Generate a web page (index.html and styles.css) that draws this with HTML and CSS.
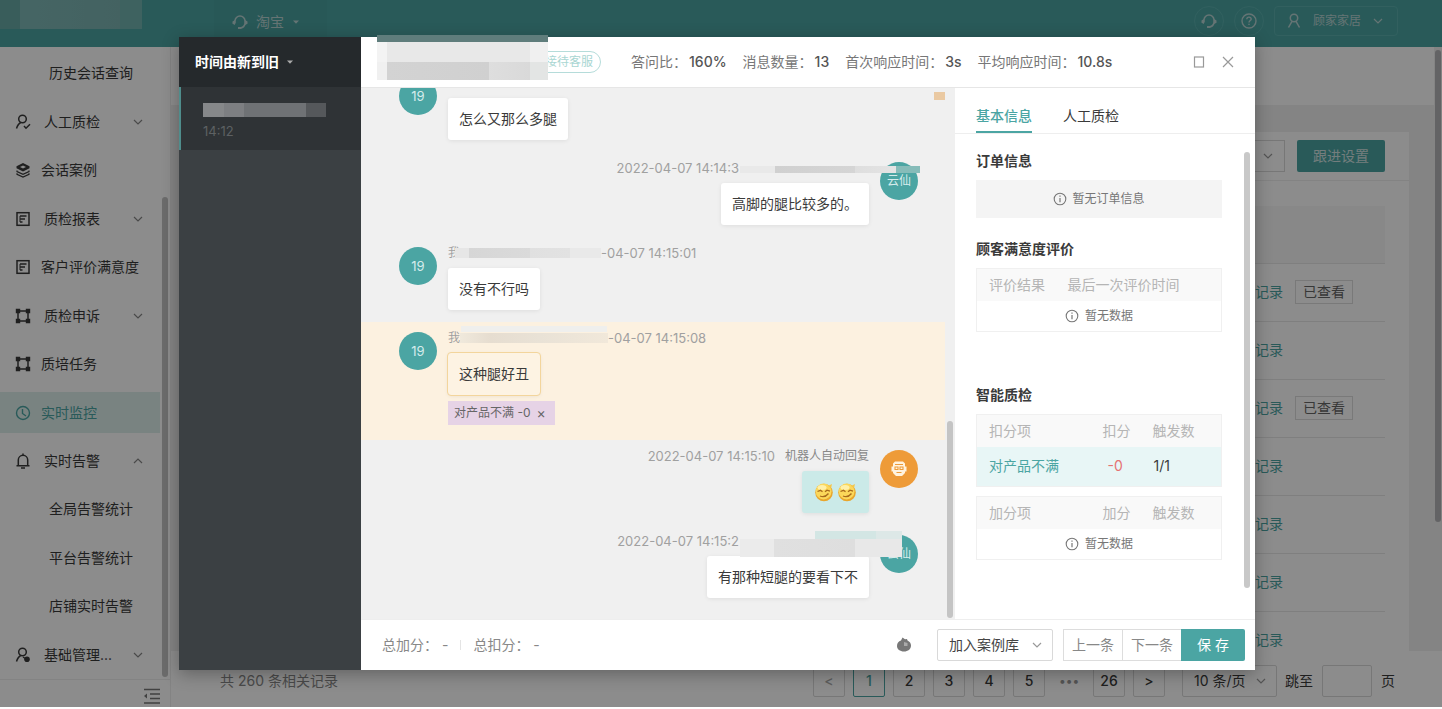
FILE: index.html
```html
<!DOCTYPE html>
<html lang="zh-CN">
<head>
<meta charset="utf-8">
<title>实时监控</title>
<link rel="stylesheet" href="styles.css">
</head>
<body>
<svg class="defs" aria-hidden="true">
  <symbol id="down" viewBox="0 0 12 12"><path d="M2 4l4 4 4-4" fill="none" stroke="currentColor" stroke-width="1.2"/></symbol>
  <symbol id="caret" viewBox="0 0 8 8"><path d="M1 2.500h6L4 5.800z" fill="currentColor"/></symbol>
  <symbol id="headset" viewBox="0 0 16 16"><path d="M3 9.500V7a5 5 0 0 1 10 0v2.500c-.5 2.500-2 4-4 4.300" fill="none" stroke="currentColor" stroke-width="1.500"/><path d="M.5 7.500L3 6v5L.5 9.800zM15.500 7.500L13 6v5l2.500-1.200zM6 13h3.500v2H6z" fill="currentColor"/></symbol>
  <symbol id="person" viewBox="0 0 16 16"><g fill="none" stroke="currentColor" stroke-width="1.5"><circle cx="8" cy="5" r="3.700"/><path d="M6 8.300L2.500 14.500M10 8.300l3.500 6.200"/></g></symbol>
  <symbol id="user-check" viewBox="0 0 16 16"><g fill="none" stroke="currentColor" stroke-width="1.500"><circle cx="7.500" cy="5" r="3.800"/><path d="M5.800 8.500C3.500 9.500 2.500 11.500 1.500 14.500M9 12l2 2.200 4-4"/></g></symbol>
  <symbol id="user-cog" viewBox="0 0 16 16"><g fill="none" stroke="currentColor" stroke-width="1.500"><circle cx="7.500" cy="5" r="3.800"/><path d="M5.800 8.500C3.500 9.500 2.500 11.500 1.500 14.500"/></g><circle cx="12" cy="12.200" r="2.800" fill="currentColor"/><path d="M8 10l3 2" stroke="currentColor" stroke-width="1.400"/></symbol>
  <symbol id="layers" viewBox="0 0 16 16"><path d="M8 1l6.500 3.200v2L8 9.500 1.500 6.200v-2z" fill="currentColor"/><path d="M5 5l3 1.500L11 5 8 3.600z" fill="#fff"/><path d="M2 8.500v1L8 12.400l6-2.900v-1M2 11.300v1L8 15l6-2.700v-1" fill="none" stroke="currentColor" stroke-width="1.200"/></symbol>
  <symbol id="report" viewBox="0 0 16 16"><g fill="none" stroke="currentColor" stroke-width="1.500"><rect x="2" y="1.700" width="12" height="12.600"/><path d="M5 5h6.500M5 8h5M5 11h2.500"/></g><path d="M5 5v6" stroke="currentColor"/></symbol>
  <symbol id="frame" viewBox="0 0 16 16"><rect x="3" y="3" width="10" height="10" fill="none" stroke="currentColor" stroke-width="1.500"/><path d="M.8.800h4.400v4.400H.8zM10.800.800h4.400v4.400h-4.400zM.8 10.800h4.400v4.400H.8zM10.800 10.800h4.400v4.400h-4.400z" fill="currentColor"/></symbol>
  <symbol id="clock" viewBox="0 0 16 16"><g fill="none" stroke="currentColor" stroke-width="1.400"><circle cx="8" cy="8" r="6.500"/><path d="M7.500 4v4.500l3.500 2.500"/></g></symbol>
  <symbol id="bell" viewBox="0 0 16 16"><g fill="none" stroke="currentColor" stroke-width="1.500"><path d="M1.500 12.700h13M3.300 12.500V7a4.700 4.700 0 0 1 9.400 0v5.500M6 15h4M8 .5v2"/></g></symbol>
  <symbol id="info" viewBox="0 0 14 14"><circle cx="7" cy="7" r="5.800" fill="none" stroke="currentColor" stroke-width="1.100"/><path d="M7 6v4.200M7 3.600v1.200" stroke="currentColor" stroke-width="1.200"/></symbol>
  <symbol id="face" viewBox="0 0 20 20"><circle cx="10" cy="10.500" r="8.800" fill="#e9a62c"/><circle cx="9.600" cy="9.500" r="7.900" fill="#fbd75a"/><ellipse cx="8" cy="5.500" rx="4.500" ry="2.500" fill="#fff0a8"/><path d="M3.500 9.500l3-1.200 2 1.500M11 9.800l2-1.600 3 1M6 14c3 1.300 6 .6 8.500-2.500" fill="none" stroke="#a86a1c" stroke-width="1.300"/><path d="M14 4l4-2-1 4z" fill="#f6c64a"/></symbol>
</svg>

<div class="app">
  <header class="topbar">
    <div class="brand"></div>
    <button class="platform" type="button"><svg class="i16"><use href="#headset"/></svg>淘宝<svg class="i8"><use href="#caret"/></svg></button>
    <div class="topbar-tools">
      <button class="round" type="button" aria-label="客服"><svg class="i16"><use href="#headset"/></svg></button>
      <button class="round" type="button" aria-label="帮助"><svg class="i16" viewBox="0 0 16 16"><g fill="none" stroke="currentColor" stroke-width="1.400"><circle cx="8" cy="8" r="7"/><path d="M5.800 6.200c.2-3 4.600-2.600 4.400 0C10 7.600 8 7.600 8 9.500M8 10.700v1.400"/></g></svg></button>
      <button class="account" type="button"><svg class="i16"><use href="#person"/></svg>顾家家居<svg class="i12"><use href="#down"/></svg></button>
    </div>
  </header>

  <div class="body">
    <aside class="sidebar">
      <nav class="menu">
        <a class="sub" href="#">历史会话查询</a>
        <a class="parent" href="#"><svg class="i16"><use href="#user-check"/></svg>人工质检<svg class="i12 arrow"><use href="#down"/></svg></a>
        <a href="#"><svg class="i16"><use href="#layers"/></svg>会话案例</a>
        <a class="parent" href="#"><svg class="i16"><use href="#report"/></svg>质检报表<svg class="i12 arrow"><use href="#down"/></svg></a>
        <a href="#"><svg class="i16"><use href="#report"/></svg>客户评价满意度</a>
        <a class="parent" href="#"><svg class="i16"><use href="#frame"/></svg>质检申诉<svg class="i12 arrow"><use href="#down"/></svg></a>
        <a href="#"><svg class="i16"><use href="#frame"/></svg>质培任务</a>
        <a class="active" href="#"><svg class="i16"><use href="#clock"/></svg>实时监控</a>
        <a class="parent" href="#"><svg class="i16"><use href="#bell"/></svg>实时告警<svg class="i12 arrow up"><use href="#down"/></svg></a>
        <a class="sub" href="#">全局告警统计</a>
        <a class="sub" href="#">平台告警统计</a>
        <a class="sub" href="#">店铺实时告警</a>
        <a class="parent" href="#"><svg class="i16"><use href="#user-cog"/></svg>基础管理...<svg class="i12 arrow"><use href="#down"/></svg></a>
      </nav>
      <div class="side-thumb"></div>
      <button class="collapse" type="button" aria-label="收起菜单"><svg viewBox="0 0 18 16" width="18" height="16"><path d="M1 1.500h16M7 6h10M7 10.500h10M1 15h16" stroke="currentColor" stroke-width="1.300"/><path d="M4 5.500v5L1 8z" fill="currentColor"/></svg></button>
    </aside>

    <main class="main">
      <div class="strip"></div>
      <section class="card">
        <div class="card-tools">
          <span class="filter"><svg class="i12"><use href="#down"/></svg></span>
          <button class="primary" type="button">跟进设置</button>
        </div>
        <table class="records">
          <thead><tr><th></th><th></th></tr></thead>
          <tbody>
            <tr><td><a href="#">记录</a></td><td><span class="seen">已查看</span></td></tr>
            <tr><td><a href="#">记录</a></td><td></td></tr>
            <tr><td><a href="#">记录</a></td><td><span class="seen">已查看</span></td></tr>
            <tr><td><a href="#">记录</a></td><td></td></tr>
            <tr><td><a href="#">记录</a></td><td></td></tr>
            <tr><td><a href="#">记录</a></td><td></td></tr>
            <tr><td><a href="#">记录</a></td><td></td></tr>
          </tbody>
        </table>
      </section>
      <footer class="pager">
        <span class="total">共 260 条相关记录</span>
        <button type="button" class="muted">&lt;</button>
        <button type="button" class="current">1</button>
        <button type="button">2</button>
        <button type="button">3</button>
        <button type="button">4</button>
        <button type="button">5</button>
        <span class="dots">•••</span>
        <button type="button">26</button>
        <button type="button">&gt;</button>
        <span class="pick size"><select aria-label="每页条数"><option>10 条/页</option></select><svg class="i12"><use href="#down"/></svg></span>
        <label class="jump">跳至<input type="text">页</label>
      </footer>
      <div class="main-thumb"></div>
    </main>
  </div>

  <div class="mask">
    <div class="dialog" role="dialog" aria-label="会话详情">
      <aside class="sessions">
        <button class="sort" type="button">时间由新到旧<svg class="i8"><use href="#caret"/></svg></button>
        <div class="session">
          <div class="pix"><i class="p1"></i><i class="p2"></i><i class="p3"></i><i class="p3"></i><i class="p3"></i><i class="p4"></i></div>
          <time>14:12</time>
        </div>
      </aside>

      <div class="detail">
        <header class="detail-head">
          <div class="name-pix"></div>
          <span class="role">接待客服</span>
          <dl class="stats">
            <div><dt>答问比：</dt><dd>160%</dd></div>
            <div><dt>消息数量：</dt><dd>13</dd></div>
            <div><dt>首次响应时间：</dt><dd>3s</dd></div>
            <div><dt>平均响应时间：</dt><dd>10.8s</dd></div>
          </dl>
          <button class="win" type="button" aria-label="最大化"><svg class="i12" viewBox="0 0 12 12"><rect x="1.500" y="1" width="9" height="10" fill="none" stroke="currentColor" stroke-width="1.200"/></svg></button>
          <button class="win" type="button" aria-label="关闭"><svg class="i12" viewBox="0 0 12 12"><path d="M1 1l10 10M11 1L1 11" stroke="currentColor" stroke-width="1.200"/></svg></button>
        </header>

        <div class="content">
          <section class="chat">
            <div class="msg">
              <span class="avatar">19</span>
              <div class="col"><div class="meta"><i class="blur wide"></i></div><p class="bubble">怎么又那么多腿</p></div>
            </div>
            <div class="msg right">
              <span class="avatar">云仙</span>
              <div class="col"><div class="meta"><time>2022-04-07 14:14:3</time><i class="gap"></i></div><p class="bubble">高脚的腿比较多的。</p></div>
              <i class="cover thin"></i>
            </div>
            <div class="msg">
              <span class="avatar">19</span>
              <div class="col"><div class="meta">我<i class="blur"></i><time>-04-07 14:15:01</time></div><p class="bubble">没有不行吗</p></div>
            </div>
            <div class="msg hit">
              <span class="avatar">19</span>
              <div class="col"><div class="meta">我<i class="blur warm"></i><time>-04-07 14:15:08</time></div><p class="bubble">这种腿好丑</p><span class="label">对产品不满 -0<button type="button" aria-label="移除">×</button></span></div>
              <i class="cover pale"></i>
            </div>
            <div class="msg right">
              <span class="avatar bot"><svg viewBox="0 0 18 18" width="18" height="18"><path d="M3 3.500L5 1.500h8l2 2v3h1.500v5H15v1.500L12 16H6l-3-3v-1.500H1.500v-5H3z" fill="#fff3de"/><path d="M5 4.500h8M5 7v2.500h3V7zM10 7v2.500h3V7zM6.500 12.500h5" fill="none" stroke="#ee9b38" stroke-width="1.100"/></svg></span>
              <div class="col"><div class="meta"><time>2022-04-07 14:15:10</time><b>机器人自动回复</b></div><p class="bubble aqua"><svg class="i20"><use href="#face"/></svg><svg class="i20"><use href="#face"/></svg></p></div>
            </div>
            <div class="msg right">
              <span class="avatar">云仙</span>
              <div class="col"><div class="meta"><time>2022-04-07 14:15:2</time><i class="gap"></i></div><p class="bubble">有那种短腿的要看下不</p></div>
              <i class="cover thick"></i>
            </div>
            <i class="mark"></i>
            <div class="chat-thumb"></div>
          </section>

          <section class="info">
            <div class="tabs" role="tablist">
              <button role="tab" aria-selected="true" type="button">基本信息</button>
              <button role="tab" aria-selected="false" type="button">人工质检</button>
            </div>
            <div class="panel">
              <h3>订单信息</h3>
              <div class="none"><svg class="i14"><use href="#info"/></svg>暂无订单信息</div>
              <h3>顾客满意度评价</h3>
              <table class="grid rating">
                <thead><tr><th>评价结果</th><th>最后一次评价时间</th></tr></thead>
                <tbody><tr><td class="empty" colspan="2"><span><svg class="i14"><use href="#info"/></svg>暂无数据</span></td></tr></tbody>
              </table>
              <h3 class="far">智能质检</h3>
              <table class="grid score">
                <thead><tr><th>扣分项</th><th>扣分</th><th>触发数</th></tr></thead>
                <tbody><tr class="found"><td>对产品不满</td><td>-0</td><td>1/1</td></tr></tbody>
              </table>
              <table class="grid score">
                <thead><tr><th>加分项</th><th>加分</th><th>触发数</th></tr></thead>
                <tbody><tr><td class="empty" colspan="3"><span><svg class="i14"><use href="#info"/></svg>暂无数据</span></td></tr></tbody>
              </table>
            </div>
            <div class="info-thumb"></div>
          </section>
        </div>

        <footer class="detail-foot">
          <span>总加分： -</span><i class="bar"></i><span>总扣分： -</span>
          <svg class="i16 push" viewBox="0 0 16 16"><path d="M5 3.500L6.500.500l2.500 1.800 2-.300.500 1.500c2.200 1 3.500 2.700 3.500 5 0 3.700-3 6-7 6s-7-2.300-7-5.500C1 6.300 2.500 4.300 5 3.500z" fill="#777"/><path d="M8 5v4h3.500V6z" fill="#aaa"/></svg>
          <span class="pick library"><select aria-label="加入案例库"><option>加入案例库</option></select><svg class="i12"><use href="#down"/></svg></span>
          <div class="group"><button type="button">上一条</button><button type="button">下一条</button><button class="save" type="button">保 存</button></div>
        </footer>
      </div>
    </div>
  </div>
</div>
</body>
</html>
```

FILE: styles.css
```css
* { box-sizing: border-box; }
body {
  margin: 0;
  background: #fff;
  color: #3a3a3a;
  font: 14px/20px Inter, "Noto Sans CJK SC", sans-serif;
}
button, input, select {
  font: inherit;
  color: inherit;
  margin: 0;
  padding: 0;
  border: 0;
  background: none;
}
a { color: inherit; text-decoration: none; }
p, dl, dd, h3 { margin: 0; }
table { border-collapse: collapse; width: 100%; }
th { font-weight: 400; text-align: left; }
th, td { padding: 0; }
svg { display: block; flex: none; }
.defs { position: absolute; width: 0; height: 0; }
.i8 { width: 8px; height: 8px; }
.i12 { width: 12px; height: 12px; }
.i14 { width: 14px; height: 14px; }
.i16 { width: 16px; height: 16px; }
.i20 { width: 20px; height: 20px; }

.app {
  position: relative;
  display: flex;
  flex-direction: column;
  height: calc(100vh - 2px);
  overflow: hidden;
}

/* top bar */
.topbar {
  display: flex;
  align-items: flex-start;
  flex: none;
  height: 47px;
  padding-right: 44px;
  background: #4ba5a3;
  color: #b9d4d4;
}
.brand {
  width: 142px;
  height: 29px;
  background: linear-gradient(90deg, #68aaa7 20px, #7fb9b7 20px, #7cb3b1 120px, #72b3b0 120px);
}
.platform {
  display: flex;
  align-items: center;
  gap: 8px;
  height: 43px;
  margin-left: 72px;
  padding: 0 27px 0 18px;
  background: #49a19f;
}
.topbar-tools { display: flex; gap: 10px; margin-left: auto; padding-top: 6px; }
.round {
  display: grid;
  place-items: center;
  width: 30px;
  height: 30px;
  border: 1px solid #5bb0ae;
  border-radius: 50%;
}
.account {
  display: flex;
  align-items: center;
  gap: 11px;
  height: 30px;
  padding: 0 13px 0 11px;
  border: 1px solid #5bb0ae;
  border-radius: 4px;
  font-size: 12px;
}

/* side menu */
.body { display: flex; flex: 1; min-height: 0; }
.sidebar {
  position: relative;
  display: flex;
  flex-direction: column;
  width: 171px;
  border-right: 1px solid #eee;
  background: #fff;
}
.menu { display: flex; flex-direction: column; flex: 1; padding: 2px 10px 0 0; }
.menu a {
  display: flex;
  align-items: center;
  flex: 1;
  gap: 10px;
  padding-left: 15px;
  border: solid transparent;
  border-width: 4px 0;
}
.menu .parent { gap: 13px; }
.menu .sub { padding-left: 49px; }
.menu .active { color: #4ba5a3; background: #dcefec padding-box; }
.arrow { margin-left: auto; margin-right: 16px; color: #888; }
.up { transform: rotate(180deg); }
.collapse {
  display: flex;
  align-items: center;
  justify-content: flex-end;
  height: 28px;
  padding: 4px 9px 0 0;
  border-top: 1px solid #eee;
  color: #777;
}
.side-thumb {
  position: absolute;
  right: 2px;
  top: 150px;
  bottom: 30px;
  width: 6px;
  border-radius: 3px;
  background: #c4c4c4;
}

/* page behind the dialog */
.main {
  position: relative;
  display: flex;
  flex-direction: column;
  flex: 1;
  min-width: 0;
  background: #f0f0f0;
}
.strip { flex: none; height: 58px; margin-right: 8px; background: #fff; }
.card {
  flex: 1;
  min-height: 0;
  overflow: hidden;
  margin: 27px 33px 0 25px;
  background: #fff;
}
.card-tools {
  display: flex;
  justify-content: flex-end;
  gap: 12px;
  height: 49px;
  padding: 8px 24px;
  border-bottom: 1px solid #eee;
}
.filter {
  display: flex;
  align-items: center;
  justify-content: flex-end;
  width: 160px;
  height: 32px;
  padding-right: 10px;
  border: 1px solid #d9d9d9;
  color: #999;
}
.primary {
  height: 32px;
  padding: 0 16px;
  border-radius: 2px;
  background: #4ba5a3;
  color: #d3e4e4;
}
.records { width: calc(100% - 48px); margin: 25px 24px 0; }
.records th { height: 57px; background: #f7f7f7; }
.records td { height: 58px; border-top: 1px solid #e8e8e8; }
.records td:first-child { text-align: right; color: #4ba5a3; }
.records td:last-child { width: 102px; padding-left: 12px; }
.seen {
  display: inline-block;
  padding: 1px 7px;
  border: 1px solid #ddd;
  color: #666;
}
.pager {
  display: flex;
  align-items: center;
  flex: none;
  gap: 8px;
  height: 56px;
  padding: 4px 47px 0 49px;
  background: #fff;
}
.total { margin-right: auto; color: #888; }
.pager button {
  width: 32px;
  height: 32px;
  border: 1px solid #d9d9d9;
  border-radius: 2px;
  font-weight: 500;
}
.pager .muted { color: #aaa; }
.pager .current { border-color: #4ba5a3; color: #4ba5a3; }
.dots { width: 32px; text-align: center; color: #999; font-size: 12px; }
.pick {
  position: relative;
  display: flex;
  align-items: center;
  border: 1px solid #d9d9d9;
  border-radius: 2px;
}
.pick select {
  appearance: none;
  width: 100%;
  height: 30px;
  padding: 0 30px 0 11px;
}
.pick svg { position: absolute; right: 9px; color: #999; pointer-events: none; }
.size { width: 95px; margin-left: 9px; }
.size select { padding-right: 10px; }
.jump { display: flex; align-items: center; gap: 9px; }
.jump input { width: 50px; height: 32px; border: 1px solid #d9d9d9; border-radius: 2px; }
.main-thumb {
  position: absolute;
  right: 1px;
  top: 3px;
  height: 472px;
  width: 6px;
  border-radius: 3px;
  background: #b5b5b8;
}

/* dialog */
.mask {
  position: absolute;
  inset: 0;
  display: flex;
  padding: 37px 187px 37px 179px;
  background: rgba(0, 0, 0, .45);
}
.dialog {
  display: flex;
  flex: 1;
  min-width: 0;
  background: #fff;
  box-shadow: 0 4px 16px rgba(0, 0, 0, .3);
}
.sessions { width: 182px; background: #3b4043; color: #fff; }
.sort {
  display: flex;
  align-items: center;
  gap: 7px;
  width: 100%;
  height: 50px;
  padding-left: 16px;
  background: #25292c;
  font-weight: 700;
}
.sort svg { color: #aaa; }
.session {
  display: flex;
  flex-direction: column;
  gap: 5px;
  height: 63px;
  padding: 16px 0 0 22px;
  border-left: 2px solid #4f8d8c;
  background: #2f3336;
}
.session time { font-size: 13px; line-height: 18px; color: #5d6163; }
.pix { display: flex; width: 123px; height: 14px; }
.pix i { flex: 1; }
.p1 { background: #86888a; }
.p2 { background: #7d7f82; }
.p3 { background: #6f7275; }
.p4 { background: #55585b; }

.detail { display: flex; flex-direction: column; flex: 1; min-width: 0; }
.detail-head {
  position: relative;
  display: flex;
  align-items: center;
  flex: none;
  height: 51px;
  padding: 0 17px 0 173px;
  border-bottom: 1px solid #e6e6e6;
}
.name-pix {
  position: absolute;
  left: 16px;
  top: -2px;
  width: 171px;
  height: 45px;
  background:
    linear-gradient(#5f7d7c, #5f7d7c) 0 0 / 100% 7px no-repeat,
    linear-gradient(90deg, #f3f3f3 10px, transparent 10px, transparent 153px, #f0f0f0 153px) 0 7px / 100% 20px no-repeat,
    linear-gradient(90deg, #f0f0f0 10px, #d3d3d3 10px, #d0d0d0 112px, #dedede 112px, #d9d9d9 153px, #e3e5e4 153px) 0 27px / 100% 18px no-repeat,
    #e8e8e8;
}
.role {
  padding: 0 7px 0 10px;
  border: 1px solid #b5dcda;
  border-radius: 11px;
  color: #a9d6d2;
  font-size: 12px;
}
.stats { display: flex; gap: 16px; margin-left: 30px; margin-right: auto; }
.stats div { display: flex; gap: 2px; }
.stats dt { color: #777; }
.stats dd { color: #555; font-weight: 500; }
.win { padding: 4px; margin-left: 9px; color: #999; }

.content { display: flex; flex: 1; min-height: 0; }
.chat {
  position: relative;
  display: flex;
  flex-direction: column;
  justify-content: flex-end;
  flex: 1;
  min-width: 0;
  overflow: hidden;
  padding: 0 10px 9px 0;
  background: #f0f0f0;
}
.msg {
  position: relative;
  display: flex;
  flex: none;
  align-items: flex-start;
  gap: 11px;
  padding: 8px 30px 12px 38px;
}
.right { flex-direction: row-reverse; padding-right: 27px; }
.hit { padding-bottom: 15px; background: #fcf1e0; }
.avatar {
  display: grid;
  place-items: center;
  width: 38px;
  height: 38px;
  margin-top: 2px;
  border-radius: 50%;
  background: #4ba5a3;
  color: #d5ecec;
  font-size: 13px;
}
.right .avatar { font-size: 12px; }
.bot { background: #ee9b38; }
.right .bot { background: #ee9b38; }
.col { display: flex; flex-direction: column; align-items: flex-start; }
.right .col { align-items: flex-end; }
.meta {
  display: flex;
  align-items: center;
  height: 16px;
  margin-bottom: 7px;
  color: #a0a0a0;
  font-size: 12px;
}
.meta time { font-size: 13px; }
.meta b { margin-left: 10px; color: #888; font-weight: 400; }
.blur {
  width: 146px;
  height: 10px;
  margin-left: -5px;
  background: linear-gradient(90deg, #e6e6e6 14px, #d6d6d6 14px, #dadada 75px, #e0e0e0 75px, #e2e2e2 115px, #e9e9e9 115px);
}
.blur.warm {
  width: 148px;
  margin-left: 0;
  background: linear-gradient(90deg, #f0e9dc, #e6ddd0 30px, #e9e2d6 80px, #f1e8da);
}
.gap { width: 130px; }
.bubble {
  padding: 11px;
  border-radius: 3px;
  background: #fff;
  box-shadow: 0 1px 4px rgba(0, 0, 0, .08);
}
.hit .bubble { outline: 1px solid #f3d59c; background: #fdf3e3; }
.aqua { display: flex; gap: 3px; padding: 11px 12px; background: #cbeae8; }
.label {
  display: flex;
  align-items: center;
  gap: 6px;
  height: 24px;
  margin-top: 6px;
  padding: 0 9px 0 6px;
  background: #e6d3e6;
  color: #666;
  font-size: 12px;
}
.label button { font-size: 14px; }
.cover { position: absolute; }
.thin {
  right: 25px;
  top: 14px;
  width: 180px;
  height: 7px;
  background: linear-gradient(90deg, #e9e9e9 35px, #d0d0d0 35px, #d5d5d5 115px, #dedede 115px, #e4e4e4 156px, #86bcb9 156px);
}
.thick {
  right: 43px;
  top: 6px;
  width: 162px;
  height: 26px;
  background:
    linear-gradient(90deg, #f0f0f0 75px, #d3e6e4 75px, #d3e6e4 136px, #dde8e7 136px) 0 0 / 100% 8px no-repeat,
    linear-gradient(90deg, #ebebeb 34px, #e0e0e0 34px, #dedede 115px, #e8e8e8 115px);
}
.pale { left: 100px; top: 4px; width: 146px; height: 6px; background: #efefed; }
.mark { position: absolute; right: 10px; top: 4px; width: 11px; height: 8px; background: #eac9a2; }
.chat-thumb {
  position: absolute;
  right: 2px;
  bottom: 1px;
  width: 6px;
  height: 197px;
  border-radius: 3px;
  background: #c4c4c4;
}

.info { position: relative; width: 300px; background: #fff; }
.tabs {
  display: flex;
  align-items: stretch;
  gap: 31px;
  height: 46px;
  padding: 0 21px;
  border-bottom: 1px solid #eee;
}
.tabs button { padding-top: 13px; border-bottom: 2px solid transparent; }
.tabs [aria-selected="true"] { border-color: #4ba5a3; color: #4ba5a3; font-weight: 500; }
.panel { padding: 17px 33px 0 21px; }
.panel h3 { font-size: 14px; line-height: 20px; font-weight: 700; margin-bottom: 9px; }
.none {
  display: flex;
  align-items: center;
  justify-content: center;
  gap: 5px;
  height: 38px;
  margin-bottom: 21px;
  background: #f4f4f4;
  color: #777;
  font-size: 12px;
}
.grid { margin-bottom: 9px; border: 1px solid #f0f0f0; }
.grid th { height: 32px; background: #f9f9f9; color: #b5b5b5; padding-left: 12px; }
.grid td { height: 40px; padding-left: 12px; }
.grid .empty { height: 31px; padding: 0; color: #777; font-size: 12px; }
.empty span { display: flex; align-items: center; justify-content: center; gap: 6px; }
.rating th:first-child { width: 79px; }
.rating th:last-child { padding-left: 12px; }
.panel .far { margin-top: 53px; }
.score th:nth-child(2) { width: 50px; padding: 0; }
.score th:nth-child(3) { width: 69px; padding: 0; }
.found { background: #e8f6f6; }
.found td:first-child { color: #4ba5a3; }
.found td:nth-child(2) { padding-left: 5px; color: #e57373; }
.found td:nth-child(3) { padding-left: 1px; }
.info-thumb {
  position: absolute;
  right: 5px;
  top: 64px;
  bottom: 31px;
  width: 6px;
  border-radius: 3px;
  background: #c8c8c8;
}

.detail-foot {
  display: flex;
  align-items: center;
  flex: none;
  height: 51px;
  padding: 0 10px 0 21px;
  border-top: 1px solid #eee;
  color: #888;
}
.bar { width: 1px; height: 10px; margin: 0 12px; background: #e4e4e4; }
.push { margin-left: auto; margin-right: 25px; }
.library { width: 116px; margin-right: 10px; color: #444; }
.group { display: flex; }
.group button { height: 32px; padding: 0 8px; border: 1px solid #ddd; border-right: 0; }
.group .save {
  padding: 0 16px;
  border: 0;
  border-radius: 0 2px 2px 0;
  background: #4ba5a3;
  color: #fff;
}
```
